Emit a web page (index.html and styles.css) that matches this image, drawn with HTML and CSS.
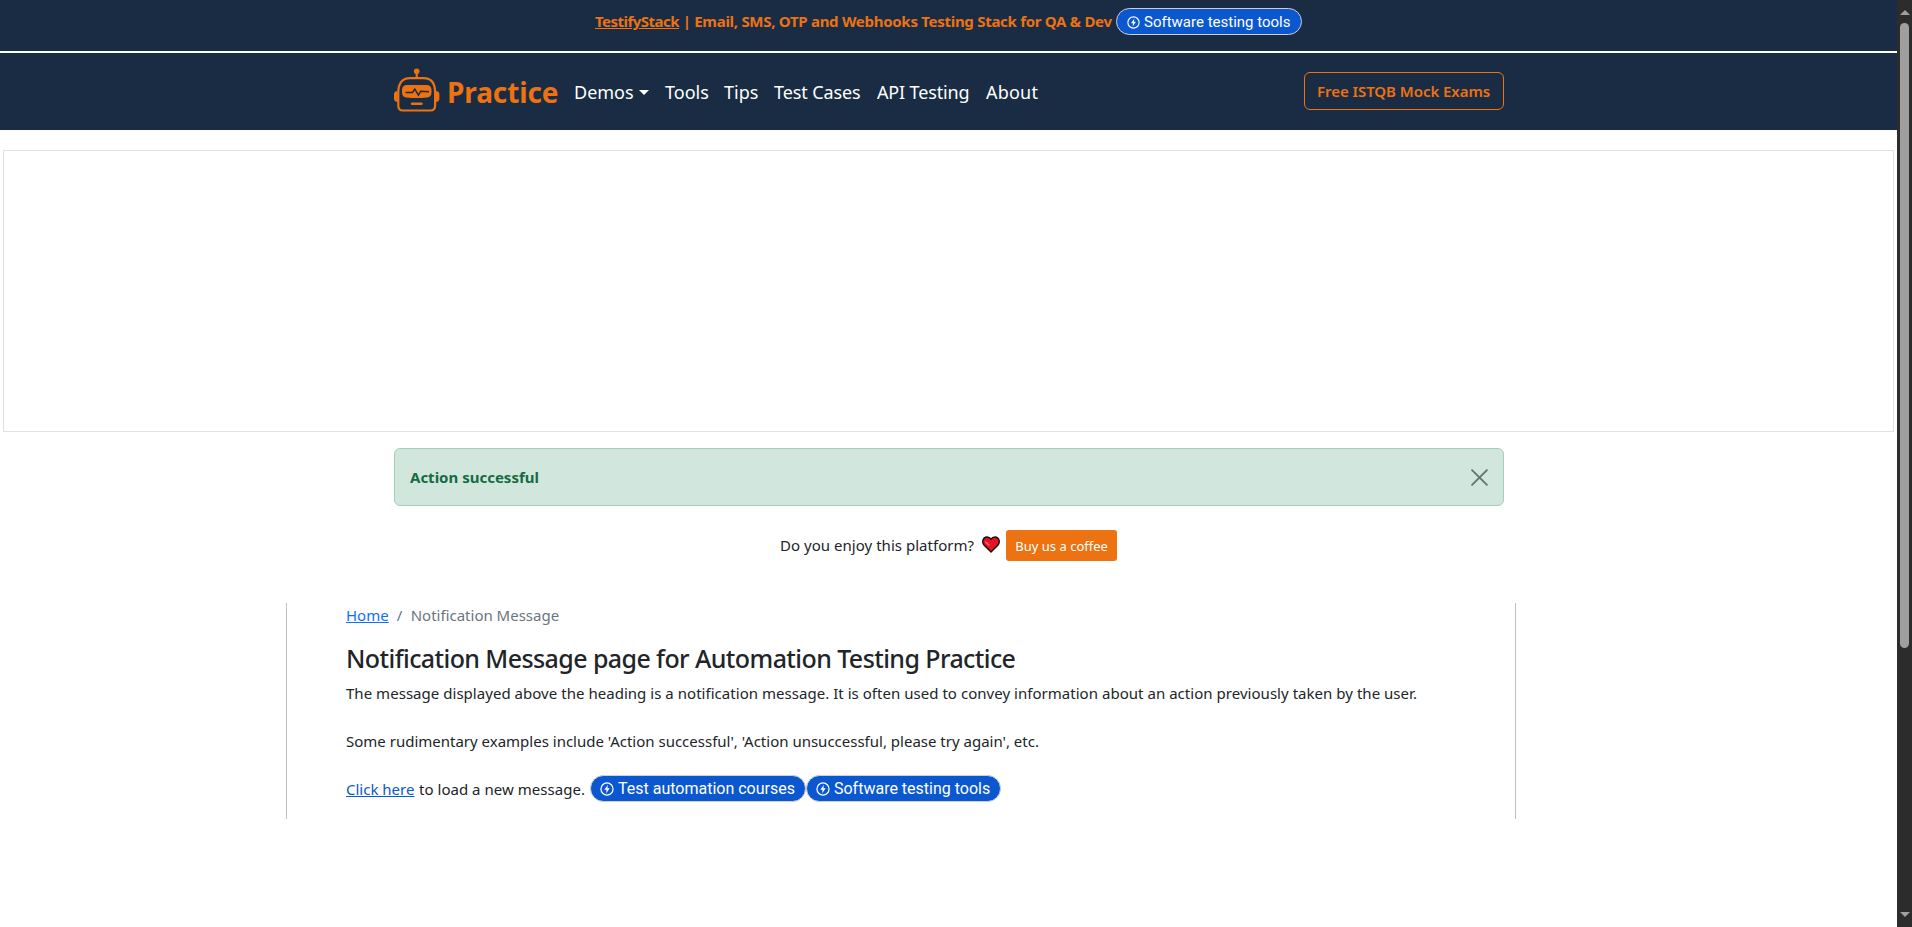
FILE: index.html
```html
<!DOCTYPE html>
<html lang="en">
<head>
<meta charset="utf-8">
<title>Notification Message page for Automation Testing Practice</title>
<link rel="stylesheet" href="styles.css">
</head>
<body>
<svg class="defs" aria-hidden="true">
  <symbol id="bolt" viewBox="0 0 24 24">
    <circle cx="12" cy="12" r="10.4" fill="none" stroke="#fff" stroke-width="2.1"/>
    <path d="M13.6 4.6 7.4 13.3h3.9l-1 6.2 6.3-8.8h-4z" fill="#fff"/>
  </symbol>
</svg>
<div class="screen">
  <div class="page">
    <div class="topbar">
      <span class="promo"><a class="promo-link" href="#">TestifyStack</a> | Email, SMS, OTP and Webhooks Testing Stack for QA &amp; Dev</span>
      <a class="pill pill-small" href="#"><svg class="bolt"><use href="#bolt"/></svg>Software testing tools</a>
    </div>
    <nav class="navbar">
      <div class="container nav-row">
        <a class="brand" href="#">
          <svg class="robot" viewBox="0 0 46 44" fill="none" stroke="#ed7211" stroke-width="2.2">
            <circle cx="22.7" cy="3.2" r="2.8" fill="#ed7211" stroke="none"/>
            <path d="M22.7 4v6"/>
            <path d="M4.3 24.5C4.3 15 8.5 10.2 16 10.2h13.400c7.500 0 11.700 4.800 11.700 14.300v13.300c0 3-1.500 4.700-4.500 4.700H8.800c-3 0-4.500-1.700-4.500-4.700z"/>
            <path d="M3.600 23C1.200 23 0 24.500 0 26.500v4C0 32.500 1.200 34 3.600 34zM41.800 23c2.400 0 3.600 1.500 3.600 3.500v4c0 2-1.200 3.500-3.600 3.500z" fill="#ed7211" stroke="none"/>
            <path d="M13 17h19.500c3 0 5 1.800 5 4.800v3c0 2.800-1.500 4.300-4.300 4.600q-10.500 1.300-21 0C9.500 29.100 8 27.600 8 24.800v-3C8 18.800 10 17 13 17z" fill="#ed7211" stroke="none"/>
            <path d="M11.500 24.500h7l2.300-3.400 3.600 6 2.300-3.800 8.300.4" stroke="#192c44" stroke-width="1.500"/>
            <path d="M18 35.800h9.500" stroke-width="2.400" stroke-linecap="round"/>
          </svg>
          <span class="brand-name">Practice</span>
        </a>
        <ul class="menu">
          <li class="demos">Demos</li><li class="tools">Tools</li><li class="tips">Tips</li><li class="cases">Test Cases</li><li class="api">API Testing</li><li class="about">About</li>
        </ul>
        <a class="exam" href="#">Free ISTQB Mock Exams</a>
      </div>
    </nav>
    <div class="ad"></div>
    <div class="container alert"><b>Action successful</b>
      <svg class="close" viewBox="0 0 16 16" stroke="#66736d" stroke-width="1.700" stroke-linecap="round"><path d="M1 1l14 14M15 1L1 15"/></svg>
    </div>
    <div class="coffee">
      <span class="enjoy">Do you enjoy this platform?</span>
      <svg class="heart" viewBox="0 0 18 17"><path d="M9 16 2 9C-.2 6.500.6 1 5 1c2 0 3.300 1 4 2.200C9.700 2 11 1 13 1c4.400 0 5.200 5.500 3 8z" fill="#e81224" stroke="#111" stroke-width="1.400"/><path d="M3.300 5.500l4 4" stroke="#f4677a" stroke-width="1.400"/></svg>
      <a class="buy" href="#">Buy us a coffee</a>
    </div>
    <main class="content">
      <div class="crumbs"><a class="home" href="#">Home</a><span class="slash">/</span><span>Notification Message</span></div>
      <h1>Notification Message page for Automation Testing Practice</h1>
      <p class="lead">The message displayed above the heading is a notification message. It is often used to convey information about an action previously taken by the user.</p>
      <p>Some rudimentary examples include 'Action successful', 'Action unsuccessful, please try again', etc.</p>
      <div class="load"><a class="click" href="#">Click here</a><span class="load-text">to load a new message.</span><a class="pill" href="#"><svg class="bolt"><use href="#bolt"/></svg>Test automation courses</a><a class="pill" href="#"><svg class="bolt"><use href="#bolt"/></svg>Software testing tools</a></div>
    </main>
  </div>
  <div class="scrollbar"><i class="up"></i><i class="thumb"></i><i class="down"></i></div>
</div>
</body>
</html>
```
FILE: styles.css
```css
* { box-sizing: border-box; }
body { margin: 0; background: #fff; color: #212529; font: 15px/24px "Noto Sans", "Open Sans", sans-serif; overflow: hidden; }
.defs { display: none; }
.screen { display: flex; height: 927px; }
.page { width: 1897px; }
.container { width: 1110px; margin-left: 394px; }

.topbar { height: 53px; padding: 8px 0 0 595px; border-bottom: 2px solid #fff; background: #192c44; display: flex; align-items: flex-start; white-space: nowrap; }
.promo { width: 521px; padding-top: 1px; color: #ed7211; font-weight: 700; letter-spacing: -.285px; }
.promo-link { color: inherit; letter-spacing: -.52px; }
.pill { display: flex; align-items: center; height: 27px; padding: 0 9px 0 9px; border: 1px solid #d0cfd0; border-radius: 14px; background: #0b57d0; color: #fff; font: 16px/25px Roboto, sans-serif; text-decoration: none; white-space: nowrap; }
.pill-small { width: 186px; padding: 1px 10px 0 10px; font-size: 15px; }
.bolt { width: 14px; height: 14px; margin-right: 4px; }
.pill-small .bolt { width: 13px; height: 13px; }

.navbar { height: 77px; background: #192c44; }
.nav-row { display: flex; align-items: center; height: 77px; }
.brand { display: flex; align-items: center; width: 180px; color: #ed7211; text-decoration: none; }
.robot { width: 46px; height: 44px; margin: 0 7px 3px 0; }
.brand-name { font-size: 28px; line-height: 40px; font-weight: 700; letter-spacing: -.1px; }
.menu { display: flex; margin: 0; padding: 1px 0 0; list-style: none; color: #fff; font-size: 18px; white-space: nowrap; }
.demos { display: flex; align-items: center; width: 91px; }
.demos::after { content: ""; margin-left: 5px; border: 5px solid transparent; border-top-color: #fff; border-bottom: 0; }
.tools { width: 59px; }
.tips { width: 50px; }
.cases { width: 103px; letter-spacing: -.1px; }
.api { width: 109px; letter-spacing: -.15px; }
.about { letter-spacing: .2px; }
.exam { width: 200px; height: 38px; margin: 0 0 1px auto; padding: 6px 0 0 12px; border: 1px solid #ed7211; border-radius: 6px; color: #ed7211; font-weight: 600; letter-spacing: -.05px; text-decoration: none; white-space: nowrap; }

.ad { height: 282px; margin: 20px 3px 16px; border: 1px solid #dee2e6; }
.alert { display: flex; align-items: center; justify-content: space-between; height: 58px; padding: 0 15px; border: 1px solid #a3cfbb; border-radius: 6px; background: #d1e7dd; color: #146c43; }
.close { width: 17px; height: 17px; overflow: visible; }
.coffee { display: flex; align-items: center; height: 31px; margin: 24px 0 42px 780px; }
.enjoy { padding-bottom: 2px; letter-spacing: .03px; }
.heart { width: 18px; height: 17px; margin: 0 6px 2px 8px; }
.buy { width: 111px; height: 31px; padding-top: 4px; border-radius: 3px; background: #ed7211; color: #fff; font-size: 13px; text-align: center; text-decoration: none; }

.content { width: 1230px; height: 216px; margin-left: 286px; padding-left: 59px; border: solid #c0c0c0; border-width: 0 1px; }
.content p { margin: 0 0 24px; white-space: nowrap; }
.content .lead { letter-spacing: .034px; }
.crumbs { display: flex; gap: 8px; color: #6c757d; }
.home { color: #0d6efd; }
.slash { width: 6px; }
h1 { margin: 16px 0 7px; font-size: 25px; line-height: 31px; font-weight: 500; letter-spacing: -.59px; white-space: nowrap; }
.load { display: flex; align-items: center; height: 24px; }
.click { width: 73px; color: #0a58ca; }
.load-text { width: 171px; letter-spacing: .03px; }
.load .pill { margin-bottom: 1px; padding-right: 10px; }

.scrollbar { display: flex; flex-direction: column; align-items: center; width: 15px; background: #2c2c2c; }
.up { margin-top: 10px; border: 5px solid transparent; border-bottom-color: #a0a0a0; border-top: 0; }
.thumb { width: 9px; height: 625px; margin-top: 8px; border-radius: 5px; background: #9f9f9f; }
.down { margin-top: 264px; border: 5px solid transparent; border-top-color: #a0a0a0; border-bottom: 0; }
```
